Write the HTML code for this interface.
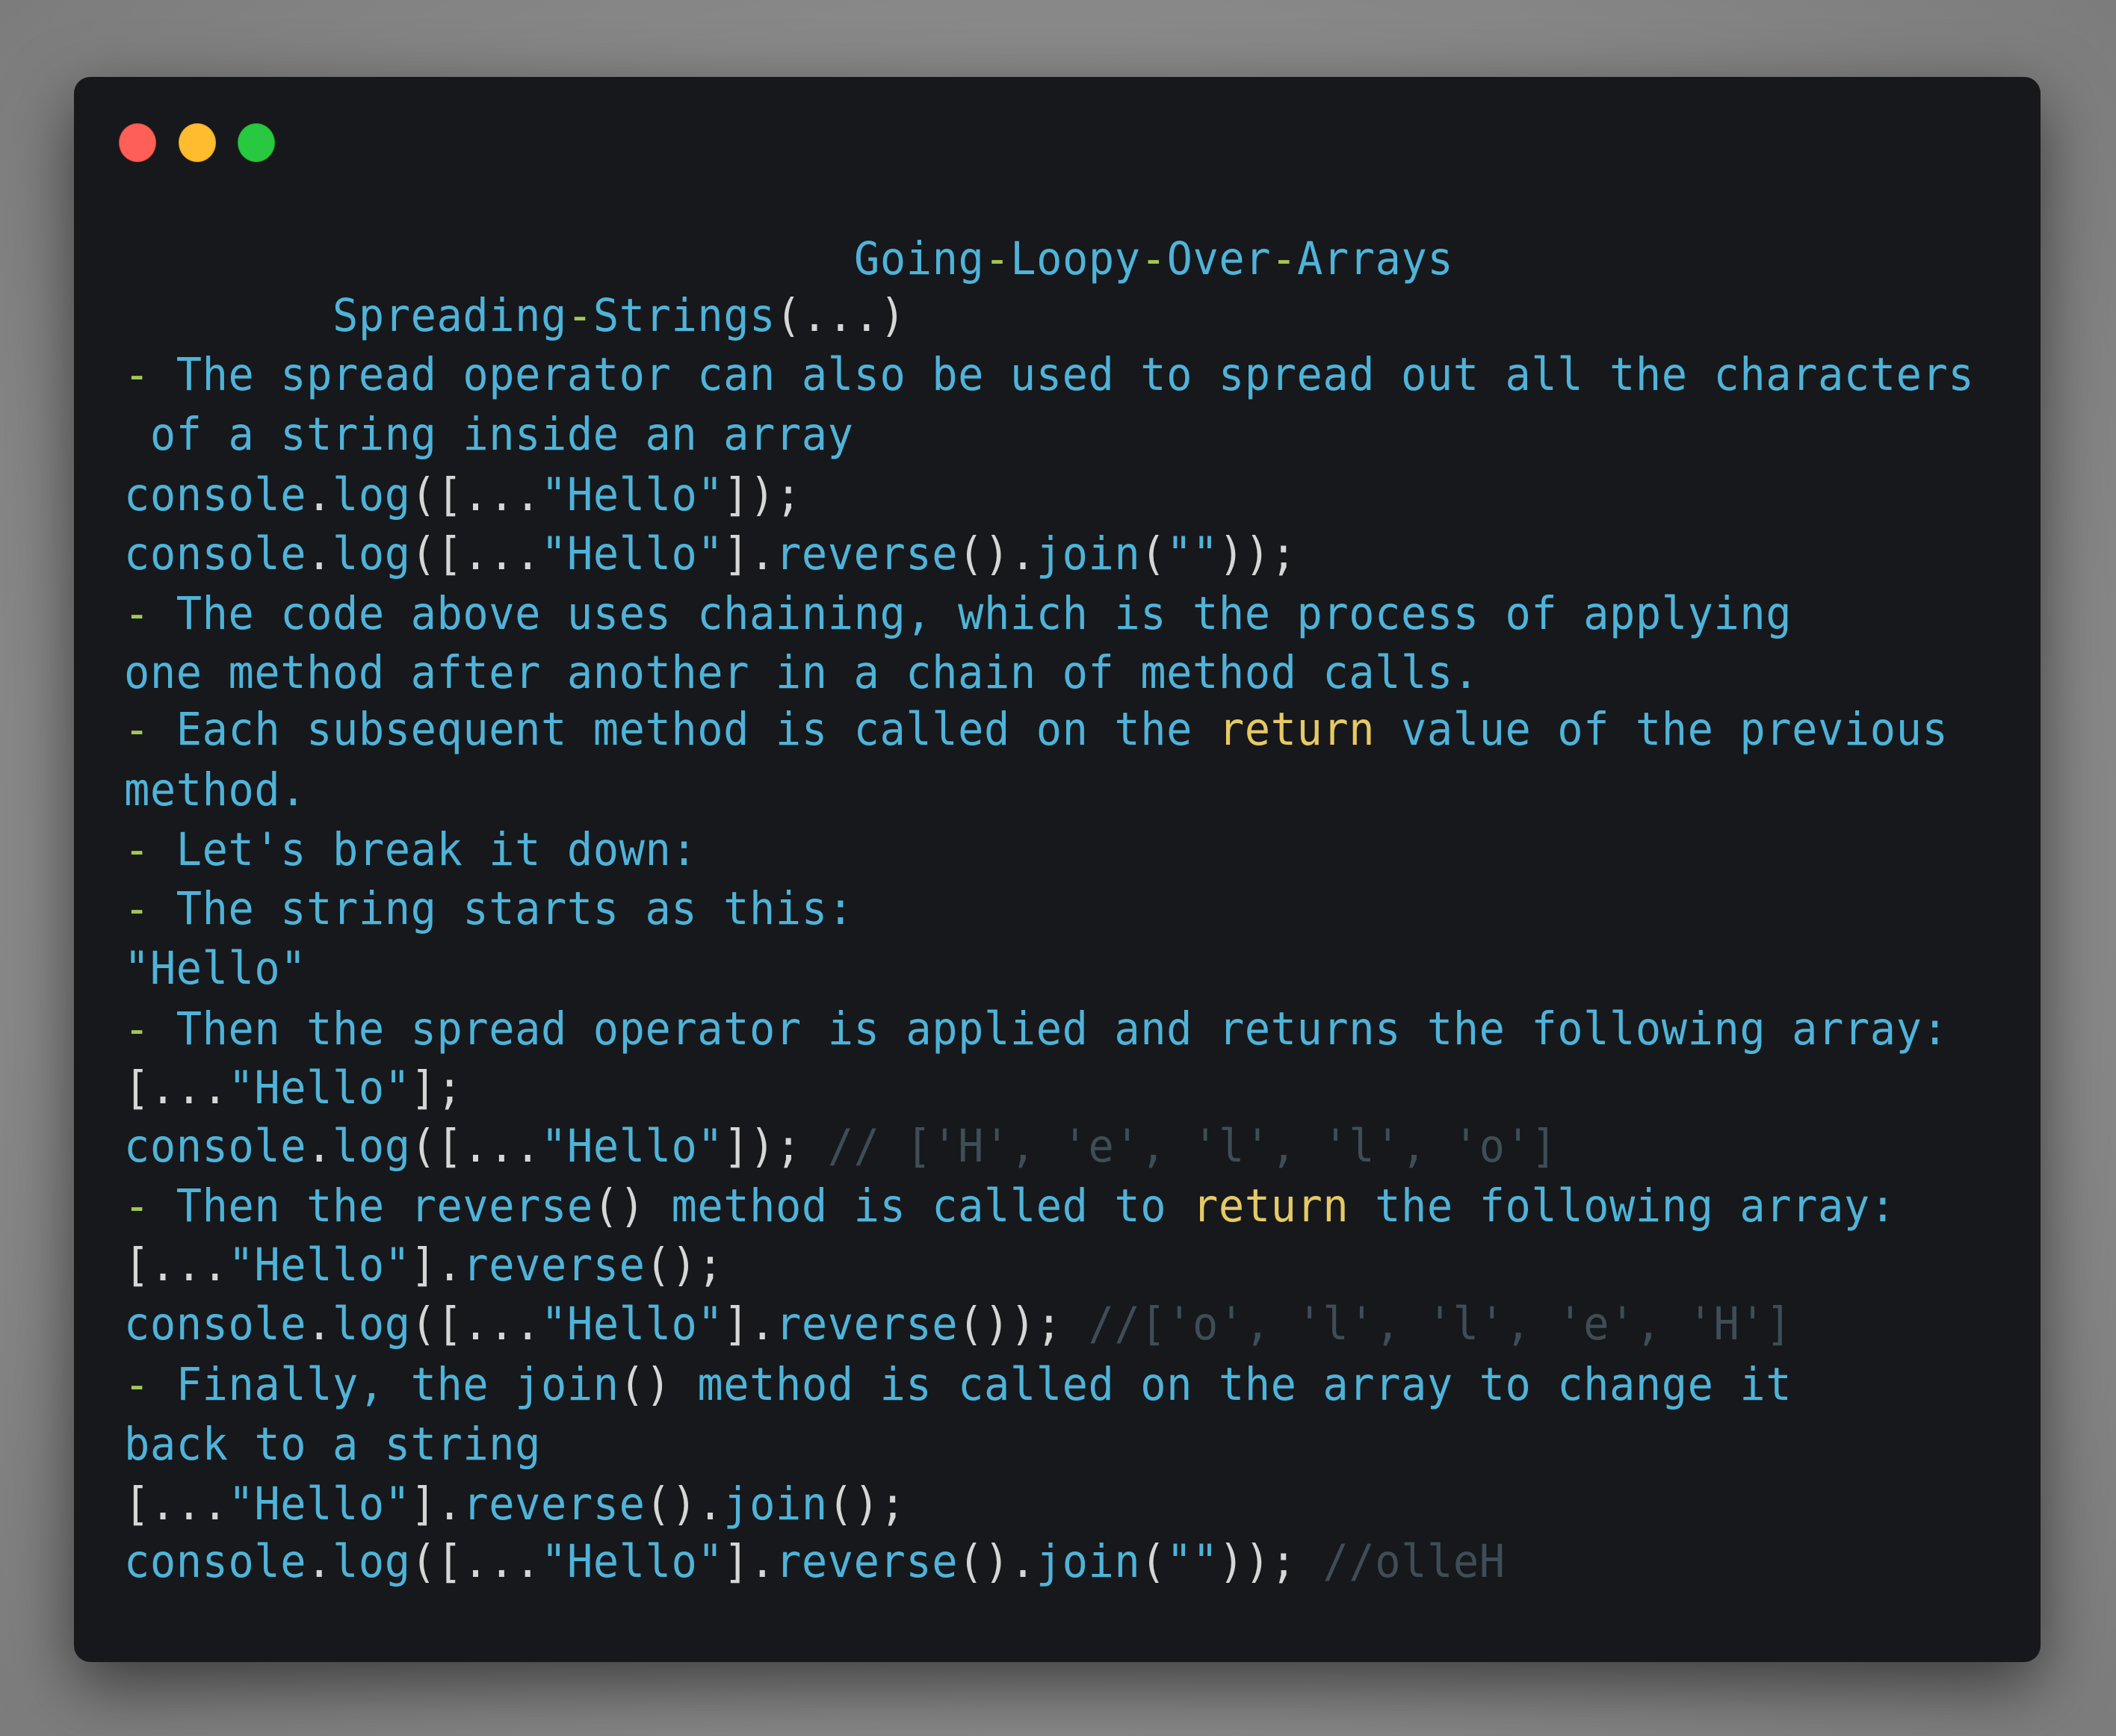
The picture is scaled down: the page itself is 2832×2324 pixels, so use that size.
<!DOCTYPE html>
<html><head><meta charset="utf-8"><style>
html,body{margin:0;padding:0}
body{width:2832px;height:2324px;background:radial-gradient(ellipse at center,#a2a2a2 0%,#8c8c8c 60%,#7c7c7c 100%);position:relative;overflow:hidden}
.win{position:absolute;left:99px;top:103px;width:2632px;height:2122px;background:#16181b;border-radius:22px;box-shadow:0 30px 90px rgba(0,0,0,.55)}
.dot{position:absolute;top:165px;width:50px;height:52px;border-radius:50%}
.l{position:absolute;left:166px;height:80px;line-height:80px;white-space:pre;font-family:"DejaVu Sans Mono","Liberation Mono",monospace;font-size:57px;letter-spacing:0.56px;color:#4fb3d9;transform:scaleY(1.06);transform-origin:left center}
.w{color:#d6d6d6}.g{color:#a3c753}.c{color:#3e4d56}.y{color:#e6c965}
</style></head><body>
<div class="win"></div>
<div class="dot" style="left:159px;background:#fe5f57;border:1px solid #e0443e;box-sizing:border-box"></div>
<div class="dot" style="left:239px;background:#febc2e;border:1px solid #dea123;box-sizing:border-box"></div>
<div class="dot" style="left:318px;background:#28c840;border:1px solid #1aab29;box-sizing:border-box"></div>

<div class="l" style="top:307px;left:1143px">Going<span class="g">-</span>Loopy<span class="g">-</span>Over<span class="g">-</span>Arrays</div>
<div class="l" style="top:383px">        Spreading<span class="g">-</span>Strings<span class="w">(...)</span></div>
<div class="l" style="top:462px"><span class="g">-</span> The spread operator can also be used to spread out all the characters</div>
<div class="l" style="top:542px"> of a string inside an array</div>
<div class="l" style="top:623px">console<span class="w">.</span>log<span class="w">([...</span>"Hello"<span class="w">]);</span></div>
<div class="l" style="top:702px">console<span class="w">.</span>log<span class="w">([...</span>"Hello"<span class="w">].</span>reverse<span class="w">().</span>join<span class="w">(</span>""<span class="w">));</span></div>
<div class="l" style="top:782px"><span class="g">-</span> The code above uses chaining, which is the process of applying</div>
<div class="l" style="top:861px">one method after another in a chain of method calls.</div>
<div class="l" style="top:937px"><span class="g">-</span> Each subsequent method is called on the <span class="y">return</span> value of the previous</div>
<div class="l" style="top:1018px">method.</div>
<div class="l" style="top:1098px"><span class="g">-</span> Let's break it down:</div>
<div class="l" style="top:1177px"><span class="g">-</span> The string starts as this:</div>
<div class="l" style="top:1257px">"Hello"</div>
<div class="l" style="top:1338px"><span class="g">-</span> Then the spread operator is applied and returns the following array:</div>
<div class="l" style="top:1417px"><span class="w">[...</span>"Hello"<span class="w">];</span></div>
<div class="l" style="top:1495px">console<span class="w">.</span>log<span class="w">([...</span>"Hello"<span class="w">]);</span> <span class="c">// ['H', 'e', 'l', 'l', 'o']</span></div>
<div class="l" style="top:1575px"><span class="g">-</span> Then the reverse<span class="w">()</span> method is called to <span class="y">return</span> the following array:</div>
<div class="l" style="top:1654px"><span class="w">[...</span>"Hello"<span class="w">].</span>reverse<span class="w">();</span></div>
<div class="l" style="top:1733px">console<span class="w">.</span>log<span class="w">([...</span>"Hello"<span class="w">].</span>reverse<span class="w">());</span> <span class="c">//['o', 'l', 'l', 'e', 'H']</span></div>
<div class="l" style="top:1814px"><span class="g">-</span> Finally, the join<span class="w">()</span> method is called on the array to change it</div>
<div class="l" style="top:1894px">back to a string</div>
<div class="l" style="top:1974px"><span class="w">[...</span>"Hello"<span class="w">].</span>reverse<span class="w">().</span>join<span class="w">();</span></div>
<div class="l" style="top:2051px">console<span class="w">.</span>log<span class="w">([...</span>"Hello"<span class="w">].</span>reverse<span class="w">().</span>join<span class="w">(</span>""<span class="w">));</span> <span class="c">//olleH</span></div>
</body></html>
